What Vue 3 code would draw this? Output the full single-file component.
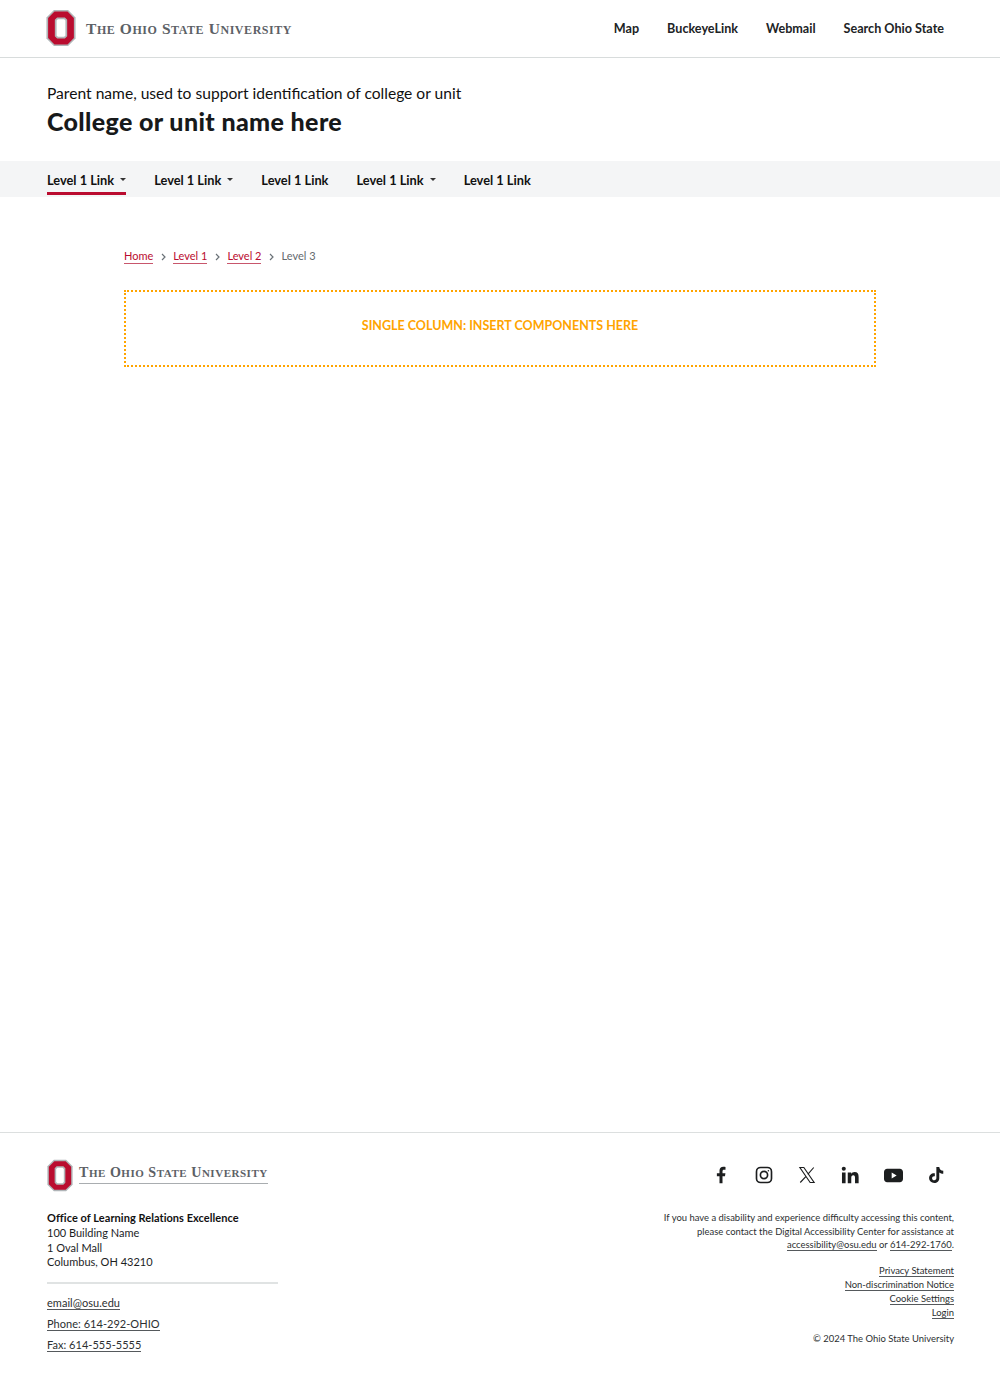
<script setup>
const utility = ['Map', 'BuckeyeLink', 'Webmail', 'Search Ohio State']
const nav = [
  { label: 'Level 1 Link', caret: true, active: true },
  { label: 'Level 1 Link', caret: true },
  { label: 'Level 1 Link' },
  { label: 'Level 1 Link', caret: true },
  { label: 'Level 1 Link' },
]
const crumbs = ['Home', 'Level 1', 'Level 2']
const policy = ['Privacy Statement', 'Non-discrimination Notice', 'Cookie Settings', 'Login']
const words = ['The', 'Ohio', 'State', 'University']
const blockO = 'M9 0.5H25L33.5 9V33L25 41.5H9L0.5 33V9Z'
const blockRed = 'M9.6 2.400H24.400L31.600 9.600V32.400L24.400 39.600H9.600L2.400 32.400V9.600Z'
const blockInner = 'M13 10H21L23 12V30L21 32H13L11 30V12Z'
</script>

<template>
  <div class="page">
    <header class="topbar">
      <a class="brand">
        <svg class="brand__o" width="30" height="38" viewBox="0 0 34 42">
          <path :d="blockO" fill="#b0b5b8" />
          <path :d="blockRed" fill="#ba0c2f" />
          <path :d="blockInner" fill="#fff" stroke="#b0b5b8" stroke-width="2" />
        </svg>
        <span class="wordmark">
          <span v-for="w in words" :key="w" class="wordmark__word">{{ w }}</span>
        </span>
      </a>
      <nav class="utility">
        <a v-for="item in utility" :key="item">{{ item }}</a>
      </nav>
    </header>

    <div class="masthead">
      <p class="masthead__parent">Parent name, used to support identification of college or unit</p>
      <h1 class="masthead__title">College or unit name here</h1>
    </div>

    <nav class="mainnav">
      <a v-for="(item, i) in nav" :key="i" class="mainnav__link" :class="{ 'is-active': item.active }">
        {{ item.label }}<span v-if="item.caret" class="caret"></span>
      </a>
    </nav>

    <main class="content">
      <div class="crumbs">
        <template v-for="c in crumbs" :key="c">
          <a class="crumbs__link">{{ c }}</a>
          <svg class="crumbs__sep" width="5" height="8" viewBox="0 0 5 8" fill="none" stroke="#6a7177" stroke-width="1.2"><path d="M1 1l3 3-3 3" /></svg>
        </template>
        <span class="crumbs__current">Level 3</span>
      </div>
      <div class="slot">SINGLE COLUMN: INSERT COMPONENTS HERE</div>
    </main>

    <footer class="footer">
      <div class="footer__left">
        <a class="brand brand--footer">
          <svg class="brand__o" width="26" height="33" viewBox="0 0 34 42">
            <path :d="blockO" fill="#b0b5b8" />
            <path :d="blockRed" fill="#ba0c2f" />
            <path :d="blockInner" fill="#fff" stroke="#b0b5b8" stroke-width="2" />
          </svg>
          <span class="wordmark wordmark--footer">
            <span v-for="w in words" :key="w" class="wordmark__word">{{ w }}</span>
          </span>
        </a>
        <address class="address">
          <strong>Office of Learning Relations Excellence</strong>
          <span>100 Building Name</span>
          <span>1 Oval Mall</span>
          <span>Columbus, OH 43210</span>
        </address>
        <hr class="divider" />
        <div class="contact">
          <div><a class="ul">email@osu.edu</a></div>
          <div><a class="ul">Phone: 614-292-OHIO</a></div>
          <div><a class="ul">Fax: 614-555-5555</a></div>
        </div>
      </div>

      <div class="footer__right">
        <div class="social">
          <svg width="18" height="18" viewBox="0 0 24 24" fill="#1c1e1f"><path d="M14 23V13.500h3.300l.6-4H14V7c0-1.200.5-2 2-2h2V1.300C17.500 1.200 16.300 1 15 1c-3 0-5 1.800-5 5.100V9.500H6.500v4H10V23z" /></svg>
          <svg width="18" height="18" viewBox="0 0 24 24" fill="none" stroke="#1c1e1f" stroke-width="2.200"><rect x="2" y="2" width="20" height="20" rx="5.500" /><circle cx="12" cy="12" r="4.800" /><circle cx="17.800" cy="6.200" r="1" fill="#1c1e1f" stroke="none" /></svg>
          <svg width="18" height="18" viewBox="0 0 24 24" fill="none" stroke="#1c1e1f" stroke-width="1.500"><path d="M2.500 2h5.300l13.700 20h-5.300zM21 2l-8 9.200M10.700 13.800 3 22" /></svg>
          <svg width="18" height="18" viewBox="0 0 24 24" fill="#1c1e1f"><circle cx="3.700" cy="3.700" r="2.700" /><path d="M1.300 8.500h4.800V23H1.300zM9 8.500h4.600v2c.8-1.400 2.400-2.400 4.500-2.400 4 0 5.400 2.500 5.400 6.500V23h-4.800v-7.500c0-2-.5-3.300-2.300-3.300-2 0-2.700 1.400-2.700 3.300V23H9z" /></svg>
          <svg width="19" height="15" viewBox="0 0 24 18" fill="#1c1e1f"><path fill-rule="evenodd" d="M4 .5h16c2.200 0 4 1.800 4 4v9c0 2.200-1.800 4-4 4H4c-2.200 0-4-1.800-4-4v-9c0-2.200 1.800-4 4-4zM9.700 5.200v7.600L16 9z" /></svg>
          <svg width="16" height="18" viewBox="0 0 22 24" fill="#1c1e1f"><path d="M11.500 1h4c.3 3 2.200 5 5.500 5.300v4c-2.100 0-4-.6-5.500-1.800v7.800c0 4-3 6.700-6.800 6.700C4.700 23 1.500 20 1.500 16.200c0-4.100 3.400-7.100 7.900-6.600v4.200c-2.100-.5-3.800.7-3.800 2.500 0 1.600 1.300 2.800 3 2.800 1.800 0 2.900-1.200 2.900-3z" /></svg>
        </div>
        <p class="access">
          If you have a disability and experience difficulty accessing this content,<br />
          please contact the Digital Accessibility Center for assistance at<br />
          <a class="ul">accessibility@osu.edu</a> or <a class="ul">614-292-1760</a>.
        </p>
        <ul class="policy">
          <li v-for="p in policy" :key="p"><a class="ul">{{ p }}</a></li>
        </ul>
        <p class="copy">© 2024 The Ohio State University</p>
      </div>
    </footer>
  </div>
</template>

<style>
html, body { margin: 0; background: #fff; }
</style>

<style scoped>
.page {
  height: 1377px;
  display: flex;
  flex-direction: column;
  font-family: Lato, "Noto Sans", sans-serif;
  color: #1c1e1f;
  box-sizing: border-box;
}

.topbar {
  height: 56px;
  flex: none;
  display: flex;
  align-items: center;
  justify-content: space-between;
  padding: 0 56px 1px 46px;
  border-bottom: 1px solid #d8dcdc;
  box-sizing: content-box;
}

.brand {
  display: flex;
  align-items: center;
  gap: 10px;
}

.brand__o { flex: none; }

.wordmark {
  display: flex;
  gap: 4.500px;
  font-family: "Liberation Serif", serif;
  font-variant: small-caps;
  font-size: 17.800px;
  font-weight: 700;
  letter-spacing: 0.55px;
  color: #5c6166;
  white-space: nowrap;
}

.wordmark__word { display: inline-block; }
.wordmark__word::first-letter { font-size: 0.87em; }

.utility {
  display: flex;
  gap: 28px;
  font-size: 12.600px;
  font-weight: 700;
  color: #212325;
}

.masthead {
  height: 103px;
  flex: none;
  padding: 24px 47px 0;
  box-sizing: border-box;
}

.masthead__parent {
  margin: 0;
  font-size: 15.600px;
  line-height: 22px;
  color: #111;
}

.masthead__title {
  margin: 1px 0 0;
  font-size: 25px;
  line-height: 32px;
  font-weight: 900;
  letter-spacing: 0.36px;
  color: #17191a;
}

.mainnav {
  height: 36px;
  flex: none;
  display: flex;
  gap: 28px;
  padding: 0 47px;
  background: #f4f5f6;
}

.mainnav__link {
  display: flex;
  align-items: center;
  height: 34px;
  padding-top: 3px;
  font-size: 12.800px;
  font-weight: 700;
  color: #111;
  box-sizing: border-box;
}

.mainnav__link.is-active {
  border-bottom: 3px solid #ba0c2f;
  padding-top: 6px;
}

.caret {
  width: 0;
  height: 0;
  margin-left: 6px;
  border-left: 3.500px solid transparent;
  border-right: 3.500px solid transparent;
  border-top: 3.500px solid #333;
}

.content {
  flex: 1;
  padding: 52px 124px 0;
}

.crumbs {
  display: flex;
  align-items: center;
  gap: 7px;
  font-size: 11px;
  line-height: 14px;
}

.crumbs__link {
  color: #ba0c2f;
  border-bottom: 1px solid #c8566c;
}

.crumbs__sep { margin: 0 0.5px; }

.crumbs__current { color: #646a6e; padding-bottom: 1px; }

.slot {
  margin-top: 26px;
  height: 77px;
  padding-top: 26px;
  border: 2px dotted #ffa400;
  box-sizing: border-box;
  text-align: center;
  font-size: 12.500px;
  line-height: 16px;
  font-weight: 700;
  color: #ffa400;
}

.footer {
  height: 245px;
  flex: none;
  display: flex;
  justify-content: space-between;
  padding: 26px 46px 0 47px;
  border-top: 1px solid #dcdfdf;
  box-sizing: border-box;
}

.brand--footer { gap: 6px; }

.wordmark--footer {
  gap: 4px;
  font-size: 16.200px;
  letter-spacing: 0.53px;
  border-bottom: 1px solid #a9adb0;
  padding-bottom: 1px;
  margin-bottom: 4px;
  line-height: 19px;
}

.footer__left { width: 231px; }

.address {
  display: flex;
  flex-direction: column;
  margin-top: 19px;
  font-style: normal;
  font-size: 11px;
  line-height: 14.800px;
}

.address strong { font-weight: 700; letter-spacing: 0.05px; color: #111; }

.divider {
  margin: 12px 0 13px;
  border: 0;
  border-top: 2px solid #e0e3e3;
}

.contact {
  display: flex;
  flex-direction: column;
  gap: 7px;
  margin-top: -1px;
  font-size: 11px;
  line-height: 14px;
  letter-spacing: 0.03px;
}

.ul {
  color: #2c2f31;
  border-bottom: 1px solid #55595c;
}

.footer__right {
  display: flex;
  flex-direction: column;
  align-items: flex-end;
  text-align: right;
  font-size: 9.450px;
  line-height: 14px;
  color: #2c2f31;
}

.social {
  display: flex;
  align-items: center;
  gap: 25px;
  height: 32px;
  margin-right: 10px;
}

.access { margin: 20px 0 0; line-height: 13.500px; }

.policy {
  list-style: none;
  margin: 12px 0 0;
  padding: 0;
}

.copy { margin: 12px 0 0; }
</style>
